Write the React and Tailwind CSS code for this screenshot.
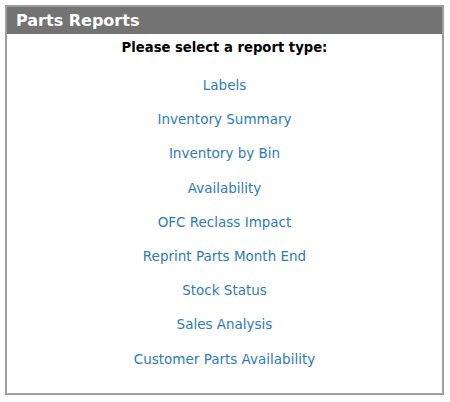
const reports = [
  'Labels',
  'Inventory Summary',
  'Inventory by Bin',
  'Availability',
  'OFC Reclass Impact',
  'Reprint Parts Month End',
  'Stock Status',
  'Sales Analysis',
  'Customer Parts Availability',
];

export default function App() {
  return (
    <div className="h-[402px] w-[450px] bg-white p-[5px] font-['DejaVu_Sans',Verdana,sans-serif]">
      <div className="flex h-[390px] w-[439px] flex-col border-2 border-[#9e9e9e] bg-white">
        <div className="flex h-[27px] items-center bg-[#737373] pl-[9px] text-[16px] font-bold text-white">
          Parts Reports
        </div>
        <div className="pt-[2px] text-center text-[13.2px] font-bold text-black leading-[24px]">
          Please select a report type:
        </div>
        <ul className="mt-[15px] flex flex-col items-center gap-[14.2px]">
          {reports.map((name) => (
            <li key={name}>
              <a href="#" className="block text-[13.5px] leading-[20px] text-[#2b7bb9]">
                {name}
              </a>
            </li>
          ))}
        </ul>
      </div>
    </div>
  );
}
